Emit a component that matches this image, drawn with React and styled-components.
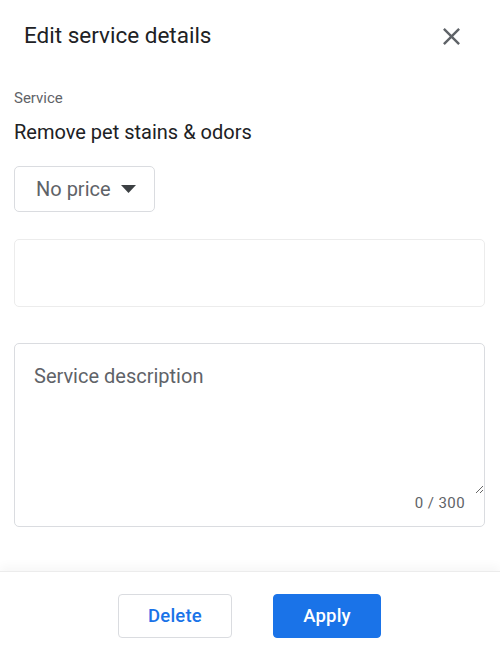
import React from "react";
import styled, { createGlobalStyle } from "styled-components";

const Global = createGlobalStyle`
  html, body { margin: 0; padding: 0; background: #fff; }
  body { font-family: Roboto, "Noto Sans", Arial, sans-serif; color: #202124; }
  * { box-sizing: border-box; }
`;

const Page = styled.div`
  width: 500px;
  min-height: 100vh;
  display: flex;
  flex-direction: column;
`;

const Header = styled.header`
  height: 72px;
  display: flex;
  align-items: center;
  justify-content: space-between;
  padding: 0 34px 0 24px;
`;

const Title = styled.h1`
  margin: 0 0 3px;
  font-size: 22.5px;
  font-weight: 400;
  line-height: 28px;
  color: #202124;
`;

const CloseButton = styled.button`
  width: 29px;
  height: 29px;
  padding: 0;
  border: 0;
  background: none;
  display: flex;
  align-items: center;
  justify-content: center;
  color: #5f6368;
  cursor: pointer;
  svg { display: block; }
`;

const Body = styled.main`
  display: flex;
  flex-direction: column;
  align-items: flex-start;
  padding: 16px 15px 0 14px;
`;

const Label = styled.div`
  font-size: 15px;
  line-height: 20px;
  color: #5f6368;
`;

const ServiceName = styled.div`
  margin-top: 12px;
  font-size: 20px;
  line-height: 24px;
  color: #202124;
`;

const PriceSelect = styled.button`
  margin-top: 22px;
  height: 46px;
  width: 141px;
  display: flex;
  align-items: center;
  gap: 10px;
  padding: 0 0 0 21px;
  border: 1px solid #dadce0;
  border-radius: 5px;
  background: #fff;
  font-family: Roboto, Arial, sans-serif;
  font-size: 20px;
  line-height: 24px;
  color: #5f6368;
  cursor: pointer;
`;

const Field = styled.div`
  align-self: stretch;
  margin-top: ${(p) => p.$gap}px;
  height: ${(p) => p.$h}px;
  border: 1px solid ${(p) => p.$border};
  border-radius: 5px;
  background: #fff;
  display: flex;
  flex-direction: column;
`;

const TextArea = styled.textarea`
  display: block;
  width: 100%;
  height: 150px;
  border: 0;
  outline: none;
  resize: vertical;
  margin: 0;
  padding: 20px 19px 0 19px;
  background: transparent;
  font-family: Roboto, Arial, sans-serif;
  font-size: 20px;
  line-height: 24px;
  color: #202124;
  &::placeholder { color: #5f6368; opacity: 1; }
`;

const Counter = styled.div`
  align-self: flex-end;
  padding-right: 19px;
  font-size: 15px;
  line-height: 18px;
  letter-spacing: 0.4px;
  color: #5f6368;
`;

const Footer = styled.footer`
  margin-top: auto;
  height: 82px;
  display: flex;
  justify-content: center;
  align-items: flex-start;
  gap: 41px;
  padding: 22px 1px 0 0;
  border-top: 1px solid #ececec;
  box-shadow: 0 -5px 9px rgba(0, 0, 0, 0.035);
  background: #fff;
`;

const ActionButton = styled.button`
  height: 44px;
  width: ${(p) => p.$w}px;
  border-radius: 4px;
  border: 1px solid ${(p) => (p.$primary ? "#1a73e8" : "#dadce0")};
  background: ${(p) => (p.$primary ? "#1a73e8" : "#fff")};
  color: ${(p) => (p.$primary ? "#fff" : "#1a73e8")};
  font-family: Roboto, Arial, sans-serif;
  font-size: 18.5px;
  font-weight: 500;
  letter-spacing: 0.2px;
  cursor: pointer;
`;

export default function App() {
  return (
    <>
      <Global />
      <Page>
        <Header>
          <Title>Edit service details</Title>
          <CloseButton aria-label="Close">
            <svg width="29" height="29" viewBox="0 0 24 24" fill="currentColor">
              <path d="M19 6.41L17.59 5 12 10.59 6.41 5 5 6.41 10.59 12 5 17.59 6.41 19 12 13.41 17.59 19 19 17.59 13.41 12z" />
            </svg>
          </CloseButton>
        </Header>
        <Body>
          <Label>Service</Label>
          <ServiceName>Remove pet stains &amp; odors</ServiceName>
          <PriceSelect>
            No price
            <svg width="15" height="8" viewBox="0 0 15 8">
              <path d="M0 0h15L7.5 8z" fill="#3c4043" />
            </svg>
          </PriceSelect>
          <Field $gap={27} $h={68} $border="#ececec" />
          <Field $gap={36} $h={184} $border="#dadce0">
            <TextArea placeholder="Service description" />
            <Counter>0 / 300</Counter>
          </Field>
        </Body>
        <Footer>
          <ActionButton $w={114}>Delete</ActionButton>
          <ActionButton $w={108} $primary>Apply</ActionButton>
        </Footer>
      </Page>
    </>
  );
}
